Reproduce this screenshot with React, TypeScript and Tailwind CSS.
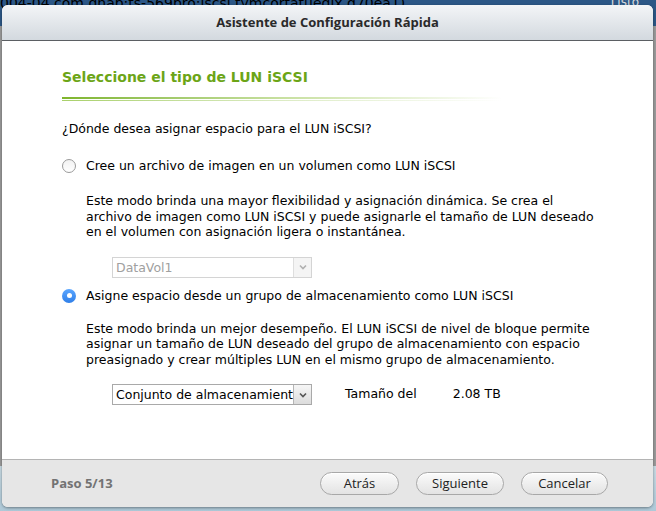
import React from "react";

function Select({ label, disabled, w = 200 }: { label: string; disabled?: boolean; w?: number }) {
  return (
    <div
      className={`flex h-[21px] border ${disabled ? "border-[#d4d4d4]" : "border-[#a9a9a9]"} bg-white`}
      style={{ width: w }}
    >
      <div className={`flex-1 overflow-hidden whitespace-nowrap pl-[3px] leading-[19px] ${disabled ? "text-[#a0a0a0]" : "text-black"}`}>
        {label}
      </div>
      <div className={`w-[18px] border-l ${disabled ? "border-[#dedede] bg-[#f4f4f4]" : "border-[#b5b5b5] bg-gradient-to-b from-[#f6f6f6] to-[#dcdcdc]"} flex items-center justify-center`}>
        <svg width="8" height="6" viewBox="0 0 8 6">
          <path d="M1 1.5 L4 4.5 L7 1.5" fill="none" stroke={disabled ? "#b0b0b0" : "#555"} strokeWidth="1.6" />
        </svg>
      </div>
    </div>
  );
}

function Btn({ children, w }: { children: React.ReactNode; w: number }) {
  return (
    <div
      className="flex h-[23px] items-center justify-center rounded-full border border-[#a8a8a8] bg-gradient-to-b from-[#fbfbfb] to-[#e3e3e3] text-[13px] text-[#222] shadow-[inset_0_1px_0_#fff]"
      style={{ width: w, fontFamily: '"Open Sans", "Liberation Sans", sans-serif' }}
    >
      {children}
    </div>
  );
}

export default function App() {
  return (
    <div
      className="relative h-[511px] w-[656px] overflow-hidden bg-[#8e8e8e]"
      style={{ fontFamily: '"DejaVu Sans", Verdana, sans-serif' }}
    >
      {/* background */}
      <div className="absolute inset-x-0 top-0 h-[26px] bg-[#2c5786]" />
      <div className="absolute left-0 top-[-7px] whitespace-nowrap text-[14px] text-black">
        004-04.com.qnap:ts-569pro:iscsi.tymcortatuegix.d70ea1)
      </div>
      <div className="absolute right-[17px] top-[-7px] text-[12px] text-[#ddd]">Listo</div>
      <div className="absolute inset-x-0 top-[26px] h-[440px] bg-[#9a9a9a]" />
      <div className="absolute inset-x-0 bottom-0 h-[45px] bg-gradient-to-b from-[#c9dbe4] to-[#aec9d8]" />

      {/* dialog */}
      <div className="absolute left-[2px] top-[5px] flex h-[502px] w-[651px] flex-col overflow-hidden rounded-[6px] bg-white shadow-[0_1px_3px_rgba(0,0,0,0.4)]">
        <div
          className="flex h-[36px] shrink-0 items-center justify-center border-b border-[#5b5f63] bg-gradient-to-b from-[#f3f5f7] to-[#d3d9df] text-[13px] font-bold text-[#2a2a2a]"
          style={{ fontFamily: '"Open Sans", "Liberation Sans", sans-serif' }}
        >
          Asistente de Configuración Rápida
        </div>
        <div className="flex flex-1 flex-col pl-[60px] pt-[26px] text-[12.5px] text-black">
          <div className="text-[14px] font-bold leading-[20px] text-[#6ca517]">Seleccione el tipo de LUN iSCSI</div>
          <div className="mt-[10px] h-[2px] w-[440px] bg-gradient-to-r from-[#7fb52a] via-[#c8e0a0] to-transparent" />
          <div className="mt-[1px] h-[1px] w-[440px] bg-gradient-to-r from-[#a9d06a] via-[#dcebc4] to-transparent" />
          <div className="mt-[20px] leading-[16px]">¿Dónde desea asignar espacio para el LUN iSCSI?</div>

          <div className="mt-[21px] flex items-center">
            <div className="h-[14px] w-[14px] rounded-full border border-[#9a9a9a] bg-gradient-to-b from-[#f2f2f2] to-white" />
            <div className="ml-[10px] leading-[16px]">Cree un archivo de imagen en un volumen como LUN iSCSI</div>
          </div>
          <div className="ml-[24px] mt-[19px] whitespace-nowrap leading-[15.5px]">
            Este modo brinda una mayor flexibilidad y asignación dinámica. Se crea el
            <br />
            archivo de imagen como LUN iSCSI y puede asignarle el tamaño de LUN deseado
            <br />
            en el volumen con asignación ligera o instantánea.
          </div>
          <div className="ml-[50px] mt-[17px]">
            <Select label="DataVol1" disabled />
          </div>

          <div className="mt-[10px] flex items-center">
            <div className="flex h-[14px] w-[14px] items-center justify-center rounded-full bg-gradient-to-b from-[#5aa6ff] to-[#2f7fe8]">
              <div className="h-[5px] w-[5px] rounded-full bg-white" />
            </div>
            <div className="ml-[10px] leading-[16px]">Asigne espacio desde un grupo de almacenamiento como LUN iSCSI</div>
          </div>
          <div className="ml-[24px] mt-[17px] whitespace-nowrap leading-[15.5px]">
            Este modo brinda un mejor desempeño. El LUN iSCSI de nivel de bloque permite
            <br />
            asignar un tamaño de LUN deseado del grupo de almacenamiento con espacio
            <br />
            preasignado y crear múltiples LUN en el mismo grupo de almacenamiento.
          </div>
          <div className="ml-[50px] mt-[17px] flex items-center">
            <Select label="Conjunto de almacenamiento 1" />
            <div className="ml-[33px]">Tamaño del</div>
            <div className="ml-[36px]">2.08 TB</div>
          </div>
        </div>
        <div className="h-[1px] shrink-0 bg-[#b4b4b4]" />
        <div className="flex h-[47px] shrink-0 items-center bg-[#e6e6e6]">
          <div
            className="ml-[49px] text-[13px] font-bold text-[#737373]"
            style={{ fontFamily: '"Open Sans", "Liberation Sans", sans-serif' }}
          >
            Paso 5/13
          </div>
          <div className="ml-auto mr-[45px] flex gap-[17px]">
            <Btn w={79}>Atrás</Btn>
            <Btn w={88}>Siguiente</Btn>
            <Btn w={87}>Cancelar</Btn>
          </div>
        </div>
      </div>
    </div>
  );
}
